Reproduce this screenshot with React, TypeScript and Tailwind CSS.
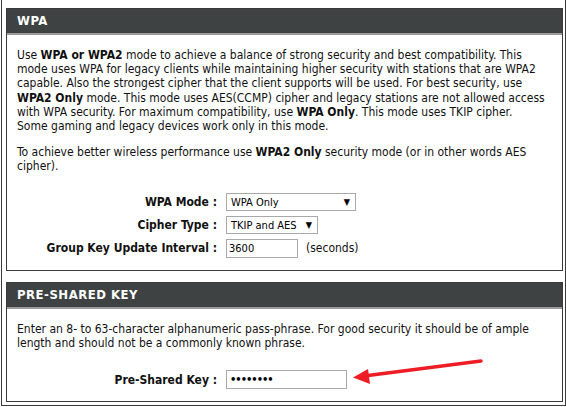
import React from "react";

const font = "font-['DejaVu_Sans_Condensed','DejaVu_Sans',sans-serif]";

function SectionHeader({ title }: { title: string }) {
  return (
    <div className="border-b-2 border-[#9a9a9a] bg-[#3e4243] h-[26px] flex items-center pl-[10px]">
      <span className="text-[13px] font-bold text-white tracking-[0.5px]">{title}</span>
    </div>
  );
}

function Select({ value, width }: { value: string; width: string }) {
  return (
    <div className={`relative h-[18px] border border-[#a9a9a9] bg-white ${width}`}>
      <span className="absolute left-[4px] top-[1px] text-[11px] leading-[15px] text-black">{value}</span>
      <span className="absolute right-[5px] top-[2px] text-[9px] leading-[13px] text-black">▼</span>
    </div>
  );
}

function Row({ label, children }: { label: string; children: React.ReactNode }) {
  return (
    <div className="flex items-center h-[23px]">
      <div className="w-[212px] text-right pr-[2px] text-[12px] font-bold text-[#111]">{label}</div>
      <div className="ml-[7px] flex items-center gap-[8px]">{children}</div>
    </div>
  );
}

export default function App() {
  return (
    <div className={`relative w-[566px] h-[407px] bg-white overflow-hidden ${font}`}>
      <div className="ml-[1px] w-[565px] h-[406px] border-x border-b border-[#3a3a3a] pt-[8px] pl-[4px]">
        {/* WPA */}
        <div className="w-[557px] h-[263px] border border-[#3a3a3a]">
          <SectionHeader title="WPA" />
          <div className="px-[10px] pt-[13px] text-[12px] leading-[14.2px] text-[#111]">
            <p>
              Use <b>WPA or WPA2</b> mode to achieve a balance of strong security and best compatibility. This
              <br />
              mode uses WPA for legacy clients while maintaining higher security with stations that are WPA2
              <br />
              capable. Also the strongest cipher that the client supports will be used. For best security, use
              <br />
              <b>WPA2 Only</b> mode. This mode uses AES(CCMP) cipher and legacy stations are not allowed access
              <br />
              with WPA security. For maximum compatibility, use <b>WPA Only</b>. This mode uses TKIP cipher.
              <br />
              Some gaming and legacy devices work only in this mode.
            </p>
            <p className="mt-[12px]">
              To achieve better wireless performance use <b>WPA2 Only</b> security mode (or in other words AES
              <br />
              cipher).
            </p>
          </div>
          <div className="mt-[17px]">
            <Row label="WPA Mode :">
              <Select value="WPA Only" width="w-[130px]" />
            </Row>
            <Row label="Cipher Type :">
              <Select value="TKIP and AES" width="w-[92px]" />
            </Row>
            <Row label="Group Key Update Interval :">
              <input
                readOnly
                value="3600"
                className="h-[19px] w-[72px] border border-[#a9a9a9] px-[2px] text-[11px] text-black outline-none"
              />
              <span className="text-[12px] text-[#111]">(seconds)</span>
            </Row>
          </div>
        </div>

        {/* Pre-shared key */}
        <div className="mt-[11px] w-[557px] h-[120px] border border-[#3a3a3a]">
          <SectionHeader title="PRE-SHARED KEY" />
          <div className="px-[10px] pt-[13px] text-[12px] leading-[14.2px] text-[#111]">
            <p>
              Enter an 8- to 63-character alphanumeric pass-phrase. For good security it should be of ample
              <br />
              length and should not be a commonly known phrase.
            </p>
          </div>
          <div className="mt-[18px]">
            <Row label="Pre-Shared Key :">
              <input
                readOnly
                type="password"
                value="12345678"
                className="h-[19px] w-[121px] border border-[#a9a9a9] px-[3px] text-[11px] font-bold tracking-[-1px] text-black outline-none"
              />
            </Row>
          </div>
        </div>
      </div>

      {/* red annotation arrow */}
      <svg className="absolute left-0 top-0 pointer-events-none" width="566" height="407">
        <line x1="481" y1="361" x2="364" y2="376" stroke="#ee1c24" strokeWidth="3.5" strokeLinecap="round" />
        <polygon points="353,377.5 368,369 370,384" fill="#ee1c24" />
      </svg>
    </div>
  );
}
